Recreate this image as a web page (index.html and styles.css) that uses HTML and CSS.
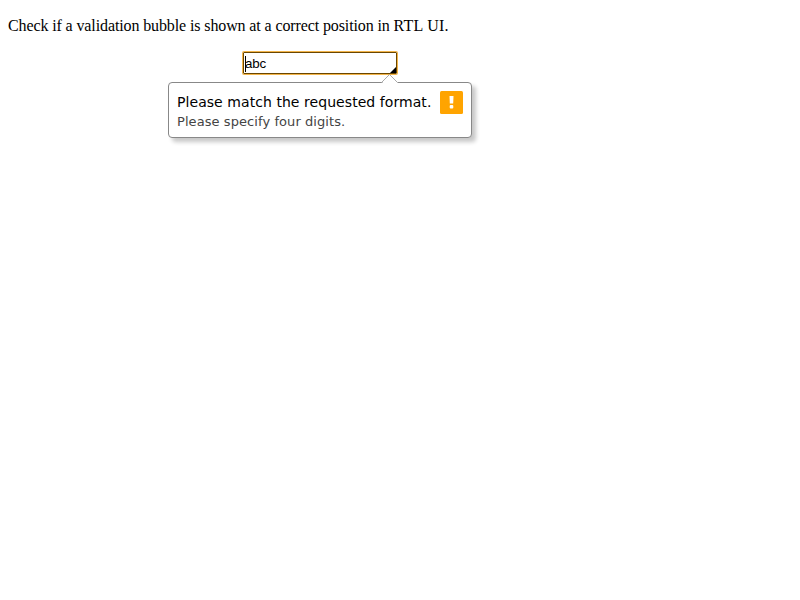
FILE: index.html
```html
<!DOCTYPE html>
<html lang="en">
<head>
<meta charset="utf-8">
<title>Validation bubble</title>
<link rel="stylesheet" href="styles.css">
</head>
<body>
<p class="intro">Check if a validation bubble is shown at a correct position in <span class="caps">RTL UI.</span></p>
<div class="field">
  <span class="caret"></span><span class="value">abc</span>
  <svg class="grip" width="6" height="6" viewBox="0 0 6 6"><path d="M6 0V6H0Z"/></svg>
</div>
<div class="bubble">
  <svg class="arrow" width="18" height="9" viewBox="0 0 18 9"><path class="arrow-fill" d="M1 9L9 1L17 9Z"/><path class="arrow-line" d="M.5 8.5L8.5 .5L16.5 8.5"/></svg>
  <div class="message">
    <div class="title">Please match the requested format.</div>
    <div class="detail">Please specify four digits.</div>
  </div>
  <svg class="icon" width="23" height="23" viewBox="0 0 23 23"><rect width="23" height="23" rx="1.5" fill="#ffa400"/><path d="M9.5 5H13.5L13.2 12.5H9.8Z" fill="#fff"/><rect x="9.7" y="14" width="3.6" height="3.5" rx="1" fill="#fff"/></svg>
</div>
</body>
</html>
```

FILE: styles.css
```css
body {
  display: flow-root;
  min-height: 600px;
  margin: 0;
  background: #fff;
  color: #000;
}
.intro {
  margin: 17px 8px 17px;
  font: 16px/18px "Liberation Serif", serif;
  letter-spacing: -.115px;
}
.caps {
  letter-spacing: .25px;
}
.field {
  position: relative;
  box-sizing: border-box;
  display: flex;
  align-items: center;
  width: 154px;
  height: 22px;
  margin-left: 243px;
  padding: 1px 0 0 1px;
  border: 1px solid #6b4700;
  box-shadow: 0 0 0 1px #f3b54a;
  border-radius: 1px;
  font: 13.333px/15px "Liberation Sans", sans-serif;
  letter-spacing: -.2px;
}
.caret {
  width: 1px;
  height: 16px;
  margin-right: -1px;
  background: #000;
}
.grip {
  position: absolute;
  right: 0;
  bottom: 0;
}
.bubble {
  position: relative;
  box-sizing: border-box;
  display: flex;
  gap: 9px;
  width: 304px;
  height: 56px;
  margin: 8px 0 0 168px;
  padding: 8px;
  border: 1px solid #888;
  border-radius: 4px;
  background: #fff;
  box-shadow: 4px 4px 4px rgba(0, 0, 0, .22);
}
.arrow {
  position: absolute;
  left: 212px;
  top: -9px;
}
.arrow-fill {
  fill: #fff;
}
.arrow-line {
  fill: none;
  stroke: #aaa;
}
.message {
  width: 254px;
  white-space: nowrap;
  font-family: "DejaVu Sans", sans-serif;
}
.title {
  font-size: 14px;
  line-height: 22px;
  letter-spacing: .06px;
}
.detail {
  font-size: 13px;
  line-height: 17px;
  letter-spacing: .075px;
  color: #444;
}
```
